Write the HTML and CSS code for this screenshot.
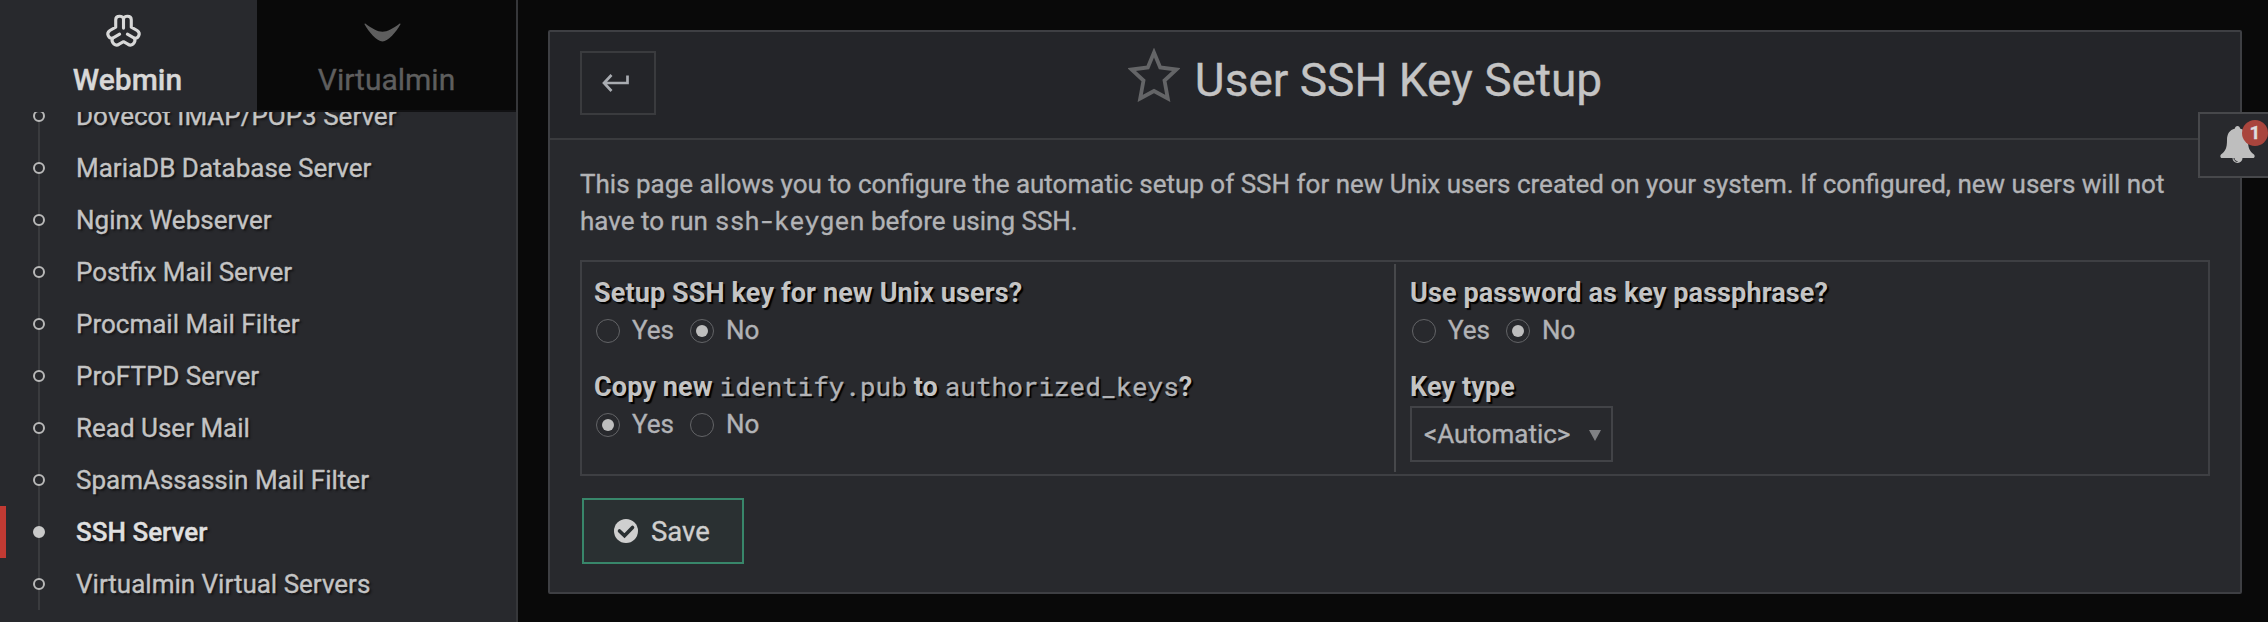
FILE: index.html
```html
<!DOCTYPE html>
<html lang="en">
<head>
<meta charset="utf-8">
<title>User SSH Key Setup</title>
<link rel="stylesheet" href="styles.css">
</head>
<body>
<div class="app">
  <aside class="sidebar">
    <nav class="tabs">
      <a class="tab active">
        <svg class="tab-icon" viewBox="0 0 36 36"><g fill="none" stroke="currentColor" stroke-width="3.2" stroke-linecap="round" stroke-linejoin="round"><path d="M18 14.500V5.500C18 1.500 10 1 10 6V13.500L4 17C-0.500 20 3 25.500 6.500 25C5 30 10 33.500 13.500 31L18 28.500L22.500 31C26 33.500 31 30 29.500 25C33 25.500 36.500 20 32 17L26 13.500V6C26 1 18 1.500 18 5.500"/><path d="M6.500 25L14 20.800M29.500 25L22 20.800"/></g></svg>
        <span>Webmin</span>
      </a>
      <a class="tab">
        <svg class="tab-icon" viewBox="0 0 36 36"><path fill="currentColor" d="M-.5 10.500C-.7 9.800 0 9.600 .6 10C7 14.800 13 18.200 18 18.200S29 14.800 35.400 10C36 9.600 36.700 9.800 36.500 10.500C32 18.500 24 28.200 18 28.200S4 18.500-.5 10.500Z"/></svg>
        <span>Virtualmin</span>
      </a>
    </nav>
    <div class="menu-clip">
      <ul class="menu">
        <li>Dovecot IMAP/POP3 Server</li>
        <li>MariaDB Database Server</li>
        <li>Nginx Webserver</li>
        <li>Postfix Mail Server</li>
        <li>Procmail Mail Filter</li>
        <li>ProFTPD Server</li>
        <li>Read User Mail</li>
        <li>SpamAssassin Mail Filter</li>
        <li class="current">SSH Server</li>
        <li>Virtualmin Virtual Servers</li>
      </ul>
    </div>
  </aside>
  <main class="content">
    <section class="panel">
      <header class="panel-head">
        <button class="back"><svg viewBox="0 0 28 20"><path d="M25.500 2.500V10H2.500M9.500 2L2 10L9.500 18" fill="none" stroke="currentColor" stroke-width="2.700"/></svg></button>
        <h1><svg class="star" viewBox="0 0 52 54"><path d="M26 4.500L32.200 19.500L48.500 21.500L36.500 32.500L39.800 50.500L26 43L12.200 50.500L15.500 32.500L3.500 21.500L19.800 19.500Z" fill="none" stroke="currentColor" stroke-width="3.800"/></svg><span>User SSH Key Setup</span></h1>
      </header>
      <div class="panel-body">
        <p>This page allows you to configure the automatic setup of SSH for new Unix users created on your system. If configured, new users will not<br>have to run <code>ssh-keygen</code> before using SSH.</p>
        <div class="options">
          <div class="column">
            <div class="field">
              <b>Setup SSH key for new Unix users?</b>
              <div class="radios"><i></i><span>Yes</span><i class="on"></i><span>No</span></div>
            </div>
            <div class="field">
              <b>Copy new <code>identify.pub</code> to <code>authorized_keys</code>?</b>
              <div class="radios"><i class="on"></i><span>Yes</span><i></i><span>No</span></div>
            </div>
          </div>
          <div class="column">
            <div class="field">
              <b>Use password as key passphrase?</b>
              <div class="radios"><i></i><span>Yes</span><i class="on"></i><span>No</span></div>
            </div>
            <div class="field">
              <b>Key type</b>
              <div class="select"><span>&lt;Automatic&gt;</span><svg viewBox="0 0 12 11"><path d="M0 0H12L6 11Z" fill="currentColor"/></svg></div>
            </div>
          </div>
        </div>
        <button class="save"><svg viewBox="0 0 24 24"><circle cx="12" cy="12" r="12" fill="#cfcfcf"/><path d="M5.500 12L10.500 16.700L18.500 8.500" fill="none" stroke="#2a3032" stroke-width="3.600" stroke-linecap="round"/></svg><span>Save</span></button>
      </div>
    </section>
  </main>
  <div class="notify">
    <svg viewBox="0 0 34 38"><path fill="#bebebe" d="M17 0C18.500 0 19.500 1 19.500 2.500C25 4 27.500 8 27.500 14C27.500 22 29 25 33.500 28.500C34.800 30 34 32 32.500 32H22A5 5 0 0 1 12 32H1.500C0 32-.8 30 .5 28.500C5 25 6.500 22 6.500 14C6.500 8 9 4 14.500 2.500C14.500 1 15.500 0 17 0Z"/><path d="M13.500 32C13.500 34 15 35.500 17 35.500" fill="none" stroke="#28292d" stroke-width="1"/></svg>
    <span class="badge">1</span>
  </div>
</div>
</body>
</html>
```
FILE: styles.css
```css
*, *::before, *::after { box-sizing: border-box; }
body {
  margin: 0;
  background: #090909;
  color: #b2b3b6;
  font-family: Roboto, "Liberation Sans", sans-serif;
  font-size: 26px;
  line-height: 37px;
  -webkit-text-stroke: 0.35px currentColor;
}
button { font: inherit; border-radius: 0; padding: 0; }
code { font-family: "Roboto Mono", "DejaVu Sans Mono", monospace; line-height: 1; }
.app {
  position: relative;
  display: flex;
  width: 2268px;
  height: 622px;
  overflow: hidden;
}
.sidebar {
  display: flex;
  flex-direction: column;
  width: 518px;
  background: #28292d;
  border-right: 2px solid #36373a;
}
.tabs { display: flex; height: 112px; flex: none; }
.tab {
  display: flex;
  flex-direction: column;
  align-items: center;
  width: 257px;
  height: 112px;
  padding: 14px 2px 0 0;
  background: #090909;
  color: #5e5e5e;
  font-size: 30px;
  border-bottom: 2px solid #111113;
}
.tab:last-child { width: 259px; padding-right: 0; }
.tab.active {
  background: #28292d;
  border-color: #28292d;
  color: #d8d8d8;
  font-weight: 500;
}
.tab-icon { width: 35px; height: 35px; margin: 0 8px 12px 0; overflow: visible; }
.menu-clip { flex: 1; overflow: hidden; }
.menu {
  list-style: none;
  margin: -22px 0 0;
  padding: 0;
  height: 520px;
  background: linear-gradient(#3a3b3e, #3a3b3e) 38px 0 / 2px 520px no-repeat;
}
.menu li {
  display: flex;
  align-items: center;
  height: 52px;
  padding-left: 33px;
  color: #c4c4c4;
  text-shadow: 2px 2px 2px #151517;
}
.menu li::before {
  content: "";
  width: 12px;
  height: 12px;
  margin-right: 31px;
  border: 2px solid #b8b8b8;
  border-radius: 50%;
  background: #28292d;
}
.menu li.current {
  color: #e0e0e0;
  font-weight: 500;
  box-shadow: inset 6px 0 #c13a33;
}
.menu li.current::before { background: #c9c9c9; border-color: #c9c9c9; }
.content { flex: 1; padding: 30px 26px 0 30px; }
.panel {
  height: 564px;
  background: #28292d;
  border: 2px solid #3e3f43;
  border-radius: 2px;
}
.panel-head {
  display: grid;
  grid-template-columns: 76px 1fr 136px;
  height: 108px;
  padding: 19px 30px 0;
  background: #242529;
  border-bottom: 2px solid #3a3b3e;
}
.back {
  display: flex;
  align-items: center;
  justify-content: center;
  width: 76px;
  height: 64px;
  padding-right: 4px;
  background: transparent;
  border: 2px solid #3a3b3e;
  color: #a9acb1;
}
.back svg { width: 28px; height: 20px; }
h1 {
  display: flex;
  justify-content: center;
  margin: 0;
  font-size: 46px;
  font-weight: 400;
  line-height: 58px;
  color: #c4c4c4;
}
.star { width: 52px; height: 54px; margin: -3px 15px 0 0; color: #646567; }
.panel-body { padding: 26px 30px 0; }
p { margin: 0; white-space: nowrap; }
p code { font-size: 25px; }
.options {
  display: flex;
  height: 216px;
  margin-top: 20px;
  padding: 2px 0;
  border: 2px solid #3e3f43;
}
.column { padding-left: 12px; }
.column:first-child { width: 812px; }
.column:last-child { flex: 1; padding-left: 14px; border-left: 2px solid #47484b; }
.field { height: 94px; padding-top: 11px; }
.field b {
  display: block;
  font-size: 27px;
  font-weight: 700;
  letter-spacing: 0.12px;
  color: #c4c4c4;
  text-shadow: 2px 2px 1px #000;
  -webkit-text-stroke: 0;
}
.field code {
  font-size: 26px;
  font-weight: 400;
  letter-spacing: 0;
  color: #b2b3b6;
  -webkit-text-stroke: 0.35px currentColor;
}
.radios { display: flex; align-items: center; padding-left: 2px; }
.radios i {
  display: flex;
  align-items: center;
  justify-content: center;
  width: 24px;
  height: 24px;
  margin-right: 12px;
  border: 1.500px solid #636467;
  border-radius: 50%;
}
.radios i.on::after {
  content: "";
  width: 12px;
  height: 12px;
  border-radius: 50%;
  background: #bebebe;
}
.radios span { margin-right: 16px; }
.select {
  display: flex;
  align-items: center;
  width: 203px;
  height: 56px;
  padding-left: 12px;
  border: 2px solid #424347;
}
.select svg { width: 12px; height: 11px; margin: 2px 0 0 19px; color: #808184; }
.save {
  display: flex;
  align-items: center;
  width: 162px;
  height: 66px;
  margin: 22px 0 0 2px;
  padding-left: 30px;
  border: 2px solid #38866a;
  background: #2a3032;
  color: #cfcfcf;
  font-size: 27.5px;
}
.save svg { width: 24px; height: 24px; margin-right: 13px; }
.notify {
  position: absolute;
  left: 2198px;
  top: 112px;
  width: 72px;
  height: 66px;
  padding: 12px 0 0 20px;
  background: #28292d;
  border: 2px solid #47484b;
}
.notify svg { display: block; width: 35px; height: 38px; }
.badge {
  position: absolute;
  left: 42px;
  top: 6px;
  width: 26px;
  height: 26px;
  border-radius: 50%;
  background: #a9453d;
  color: #ddd;
  font-size: 19px;
  font-weight: 700;
  line-height: 26px;
  text-align: center;
}
```
